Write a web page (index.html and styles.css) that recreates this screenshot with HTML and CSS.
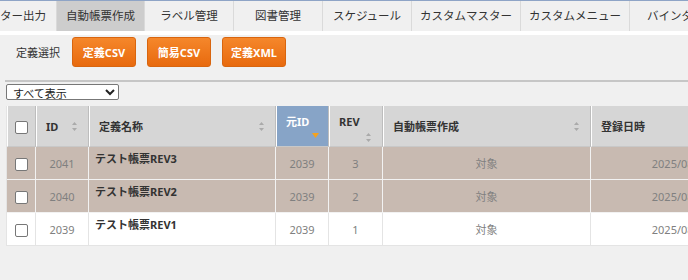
FILE: index.html
```html
<!DOCTYPE html>
<html lang="ja">
<head>
    <meta charset="UTF-8">
    <title>自動帳票作成</title>
    <link rel="stylesheet" href="styles.css">
</head>
<body>
    <nav class="tabs">
        <div class="tab first">ター出力</div>
        <div class="tab active">自動帳票作成</div>
        <div class="tab">ラベル管理</div>
        <div class="tab">図書管理</div>
        <div class="tab">スケジュール</div>
        <div class="tab">カスタムマスター</div>
        <div class="tab">カスタムメニュー</div>
        <div class="tab last">バインダー管理</div>
    </nav>

    <div class="toolbar">
        <span class="label">定義選択</span>
        <button class="btn">定義CSV</button>
        <button class="btn">簡易CSV</button>
        <button class="btn">定義XML</button>
    </div>

    <div class="divider"></div>

    <select class="filter">
        <option>すべて表示</option>
        <option>対象のみ</option>
    </select>

    <table class="list">
        <colgroup>
            <col style="width: 29px">
            <col style="width: 53px">
            <col style="width: 187px">
            <col style="width: 53px">
            <col style="width: 54px">
            <col style="width: 208px">
            <col style="width: 220px">
        </colgroup>
        <thead>
            <tr>
                <th class="check"><input type="checkbox"></th>
                <th><div class="th-row">ID <svg class="sort" width="5" height="9" viewBox="0 0 5 9"><path d="M2.5 0L5 3H0z M2.5 9L0 6h5z" fill="#aaa"/></svg></div></th>
                <th><div class="th-row">定義名称 <svg class="sort" width="5" height="9" viewBox="0 0 5 9"><path d="M2.5 0L5 3H0z M2.5 9L0 6h5z" fill="#aaa"/></svg></div></th>
                <th class="narrow sorted">元ID<div class="icon-line"><svg width="7" height="5" viewBox="0 0 7 5"><path d="M0 0h7L3.5 5z" fill="#f5a21c"/></svg></div></th>
                <th class="narrow">REV<div class="icon-line"><svg class="sort" width="5" height="9" viewBox="0 0 5 9"><path d="M2.5 0L5 3H0z M2.5 9L0 6h5z" fill="#aaa"/></svg></div></th>
                <th><div class="th-row">自動帳票作成 <svg class="sort" width="5" height="9" viewBox="0 0 5 9"><path d="M2.5 0L5 3H0z M2.5 9L0 6h5z" fill="#aaa"/></svg></div></th>
                <th><div class="th-row">登録日時</div></th>
            </tr>
        </thead>
        <tbody>
            <tr class="marked">
                <td class="check"><input type="checkbox"></td>
                <td class="num">2041</td>
                <td class="name">テスト帳票REV3</td>
                <td class="num">2039</td>
                <td class="num">3</td>
                <td class="num">対象</td>
                <td class="num date">2025/08/29 10:15</td>
            </tr>
            <tr class="marked">
                <td class="check"><input type="checkbox"></td>
                <td class="num">2040</td>
                <td class="name">テスト帳票REV2</td>
                <td class="num">2039</td>
                <td class="num">2</td>
                <td class="num">対象</td>
                <td class="num date">2025/08/29 10:12</td>
            </tr>
            <tr>
                <td class="check"><input type="checkbox"></td>
                <td class="num">2039</td>
                <td class="name">テスト帳票REV1</td>
                <td class="num">2039</td>
                <td class="num">1</td>
                <td class="num">対象</td>
                <td class="num date">2025/08/29 10:08</td>
            </tr>
        </tbody>
    </table>
</body>
</html>
```

FILE: styles.css
```css
body {
    margin: 0;
    background: #f0f0f0;
    font-family: "Noto Sans", "Noto Sans CJK JP", sans-serif;
    font-size: 11px;
    line-height: 15px;
    color: #333;
    overflow: hidden;
}
.tabs {
    display: flex;
    border-top: 1px solid #8ea4c6;
    border-bottom: 4px solid #fff;
    background: #f0f0f0;
    white-space: nowrap;
}
.tab {
    height: 30px;
    line-height: 30px;
    padding: 0 8px;
    min-width: 89px;
    box-sizing: border-box;
    text-align: center;
    border-right: 1px solid #dadada;
    flex-shrink: 0;
    font-size: 11.5px;
}
.tab.first {
    min-width: 0;
    padding: 0 12px 0 0;
    width: 57px;
    text-align: left;
}
.tab.active {
    background: #cdcdcd;
    min-width: 88px;
}
.tab.last {
    padding-left: 17px;
}
.toolbar {
    display: flex;
    align-items: center;
    gap: 11px;
    padding: 2px 0 0 16px;
}
.label {
    margin-right: 1px;
}
.btn {
    width: 64px;
    height: 30px;
    padding: 0;
    border: 1px solid #d8650f;
    border-radius: 3px;
    background: linear-gradient(#f5872b, #e86a0e);
    color: #fff;
    font-family: inherit;
    font-size: 11px;
    font-weight: bold;
}
.divider {
    margin: 13px 0 0 5px;
    border-top: 2px solid #c6c6c6;
}
.filter {
    display: block;
    margin: 2px 0 0 6px;
    width: 113px;
    height: 16px;
    padding: 0 0 0 2px;
    border: 1px solid #777;
    border-radius: 2px;
    background: #fff;
    font-family: inherit;
    font-size: 11px;
    color: #222;
}
.list {
    margin: 6px 0 0 6px;
    border-collapse: separate;
    border-spacing: 0;
    table-layout: fixed;
    width: 804px;
    border-left: 1px solid #e4e4e4;
}
.list th,
.list td {
    box-sizing: border-box;
}
.list th {
    height: 41px;
    background: #d6d6d6;
    font-weight: bold;
    text-align: left;
    padding: 0 9px;
    border-right: 1px solid #bdbdbd;
    border-left: 1px solid #fff;
    border-bottom: 1px solid #c8c8c8;
    color: #333;
}
.th-row {
    display: flex;
    justify-content: space-between;
    align-items: center;
}
.sort {
    display: block;
    margin-right: 2px;
}
.list th.narrow {
    vertical-align: top;
    padding-top: 8px;
}
.icon-line {
    display: flex;
    justify-content: flex-end;
    margin-top: 4px;
}
.list th.sorted {
    background: #87a4c7;
    color: #fff;
}
.list th.check,
.list td.check {
    padding: 0;
    text-align: center;
}
.list td {
    height: 33px;
    padding: 0 6px;
    border-right: 1px solid #e4e4e4;
    border-bottom: 1px solid #e4e4e4;
    background: #fff;
    color: #808080;
}
.list tr.marked td {
    background: #c8bab1;
    border-right-color: #f2f2f2;
    border-bottom-color: #f2f2f2;
}
.list td.num {
    text-align: center;
}
.list td.date {
    padding-right: 14px;
}
.list td.name {
    vertical-align: top;
    padding-top: 4px;
    font-weight: bold;
    color: #333;
}
input[type="checkbox"] {
    appearance: none;
    width: 13px;
    height: 13px;
    margin: 0;
    vertical-align: middle;
    border: 1px solid #777;
    border-radius: 2px;
    background: #fff;
}
```
